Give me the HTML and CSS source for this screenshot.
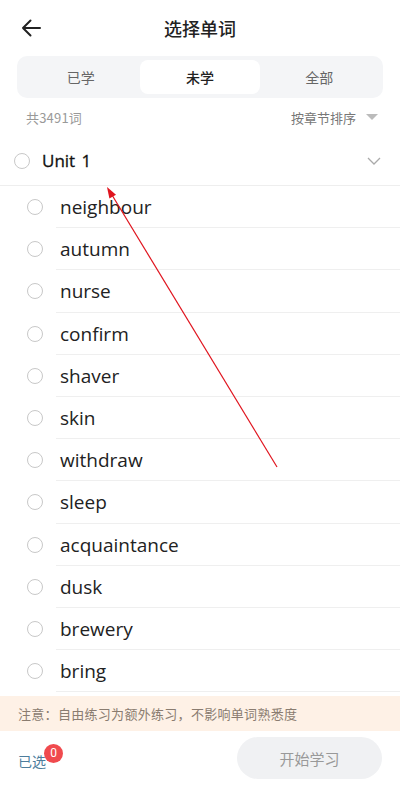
FILE: index.html
```html
<!DOCTYPE html>
<html lang="zh">
<head>
<meta charset="utf-8">
<title>选择单词</title>
<link rel="stylesheet" href="styles.css">
</head>
<body>
<div class="page">
  <header class="topbar">
    <svg class="back" width="20" height="18" viewBox="0 0 20 18"><path d="M19 9H2M9.5 1.5L2 9l7.5 7.5" fill="none" stroke="#222" stroke-width="2" stroke-linecap="round" stroke-linejoin="round"/></svg>
    <h1 class="title">选择单词</h1>
  </header>
  <div class="tabs">
    <div class="tab">已学</div>
    <div class="tab active">未学</div>
    <div class="tab">全部</div>
  </div>
  <div class="meta">
    <span class="count">共3491词</span>
    <span class="sort">按章节排序<span class="tri"></span></span>
  </div>
  <div class="unit">
    <span class="radio"></span>
    <span class="unit-name">Unit 1</span>
    <svg class="chev" width="14" height="8" viewBox="0 0 14 8"><path d="M1 1l6 6 6-6" fill="none" stroke="#aaa" stroke-width="1.3"/></svg>
  </div>
  <ul class="words">
    <li class="word"><span class="radio"></span><span class="w">neighbour</span></li>
    <li class="word"><span class="radio"></span><span class="w">autumn</span></li>
    <li class="word"><span class="radio"></span><span class="w">nurse</span></li>
    <li class="word"><span class="radio"></span><span class="w">confirm</span></li>
    <li class="word"><span class="radio"></span><span class="w">shaver</span></li>
    <li class="word"><span class="radio"></span><span class="w">skin</span></li>
    <li class="word"><span class="radio"></span><span class="w">withdraw</span></li>
    <li class="word"><span class="radio"></span><span class="w">sleep</span></li>
    <li class="word"><span class="radio"></span><span class="w">acquaintance</span></li>
    <li class="word"><span class="radio"></span><span class="w">dusk</span></li>
    <li class="word"><span class="radio"></span><span class="w">brewery</span></li>
    <li class="word"><span class="radio"></span><span class="w">bring</span></li>
  </ul>
  <div class="notice">注意：自由练习为额外练习，不影响单词熟悉度</div>
  <footer class="bottom">
    <div class="selected">已选<span class="badge">0</span></div>
    <button class="start">开始学习</button>
  </footer>
  <svg class="annot" width="400" height="804" viewBox="0 0 400 804">
    <line x1="277" y1="467" x2="112" y2="195" stroke="#e0141e" stroke-width="1.2"/>
    <polygon points="107,187 116,194.8 109.4,198.6" fill="#e0141e"/>
  </svg>
</div>
</body>
</html>
```
FILE: styles.css
```css
* { box-sizing: border-box; margin: 0; padding: 0; }
html, body { background: #fff; }
body {
  font-family: "Noto Sans CJK SC", "Noto Sans", sans-serif;
  color: #222;
}
.page {
  position: relative;
  width: 400px;
  height: 804px;
  display: flex;
  flex-direction: column;
  overflow: hidden;
}
.topbar {
  height: 56px;
  display: flex;
  align-items: center;
  justify-content: center;
  position: relative;
}
.back {
  position: absolute;
  left: 21px;
  top: 19px;
}
.title {
  font-size: 18px;
  font-weight: 500;
  color: #222;
  line-height: 1;
}
.tabs {
  margin: 0 17px;
  height: 42px;
  padding: 4px;
  background: #f4f5f7;
  border-radius: 10px;
  display: grid;
  grid-template-columns: 1fr 1fr 1fr;
}
.tab {
  display: flex;
  align-items: center;
  justify-content: center;
  font-size: 14px;
  color: #666;
  border-radius: 8px;
}
.tab.active {
  background: #fff;
  color: #222;
  font-weight: 500;
}
.meta {
  height: 38px;
  padding: 0 22px 0 26px;
  display: flex;
  align-items: center;
  justify-content: space-between;
  font-size: 13px;
}
.count { color: #999; letter-spacing: 0.2px; }
.sort { color: #777; display: flex; align-items: center; }
.tri {
  margin-left: 10px;
  width: 0; height: 0;
  border-left: 6px solid transparent;
  border-right: 6px solid transparent;
  border-top: 6px solid #bbb;
}
.radio {
  width: 16px;
  height: 16px;
  border-radius: 50%;
  border: 1px solid #c8c8c8;
  flex: none;
}
.unit {
  height: 50px;
  display: flex;
  align-items: center;
  padding: 0 19px 0 14px;
  border-bottom: 1px solid #eee;
}
.unit-name {
  margin-left: 12px;
  font-family: "Open Sans", "Noto Sans", sans-serif;
  font-size: 17px;
  font-weight: 500;
  color: #111;
  flex: 1;
  word-spacing: 2px;
  -webkit-text-stroke: 0.3px #111;
}
.words { list-style: none; }
.word {
  height: 42.2px;
  display: flex;
  align-items: center;
  padding-left: 27px;
  position: relative;
}
.word::after {
  content: "";
  position: absolute;
  left: 56px;
  right: 0;
  bottom: 0;
  height: 1px;
  background: #efefef;
}
.w {
  margin-left: 17px;
  font-family: "Open Sans", "Noto Sans", sans-serif;
  font-size: 19px;
  color: #222;
}
.notice {
  margin-top: 4px;
  height: 35px;
  background: #fef1e6;
  color: #8a7c70;
  font-size: 13px;
  letter-spacing: 0.3px;
  display: flex;
  align-items: center;
  padding-left: 18px;
}
.bottom {
  flex: 1;
  display: flex;
  align-items: flex-start;
  justify-content: space-between;
  padding: 6px 18px 0 18px;
}
.selected {
  position: relative;
  margin-top: 14px;
  font-size: 14px;
  color: #4d7d9c;
  line-height: 20px;
}
.badge {
  position: absolute;
  left: 26px;
  top: -7px;
  width: 19px;
  height: 19px;
  border-radius: 50%;
  background: #f04a4e;
  color: #fff;
  font-family: "Roboto", "Noto Sans", sans-serif;
  font-size: 12px;
  line-height: 19px;
  text-align: center;
}
.start {
  width: 145px;
  height: 42px;
  border: none;
  border-radius: 21px;
  background: #f0f1f3;
  color: #999;
  font-family: "Noto Sans CJK SC", sans-serif;
  font-size: 15px;
}
.annot {
  position: absolute;
  left: 0;
  top: 0;
  pointer-events: none;
}
```
